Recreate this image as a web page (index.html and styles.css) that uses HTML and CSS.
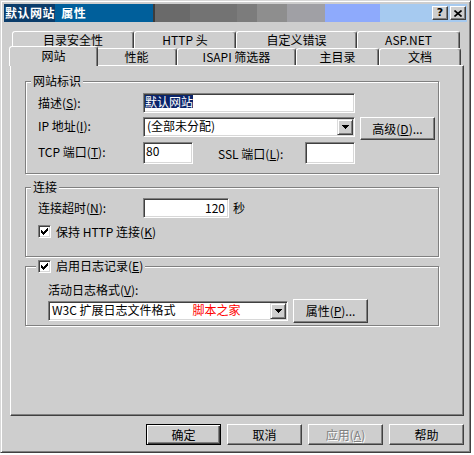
FILE: index.html
```html
<!DOCTYPE html>
<html lang="zh-CN">
<head>
<meta charset="utf-8">
<title>默认网站 属性</title>
<link rel="stylesheet" href="styles.css">
</head>
<body>
<div class="window">
  <div class="titlebar">
    <span class="title">默认网站 属性</span>
    <div class="tb-buttons">
      <span class="tb-btn q">?</span>
      <span class="tb-btn"><svg width="8" height="7" viewBox="0 0 8 7"><path d="M0.5 0.5L7.5 6.5M7.5 0.5L0.5 6.5" stroke="#000" stroke-width="1.6"/></svg></span>
    </div>
  </div>
  <div class="content">
    <div class="tabrow back">
      <div class="tab" style="width:122px">目录安全性</div>
      <div class="tab" style="width:102px">HTTP 头</div>
      <div class="tab" style="width:121px">自定义错误</div>
      <div class="tab" style="width:103px">ASP.NET</div>
    </div>
    <div class="tabrow front">
      <div class="tab sel" style="width:89px">网站</div>
      <div class="tab" style="width:81px">性能</div>
      <div class="tab" style="width:119px">ISAPI 筛选器</div>
      <div class="tab" style="width:83px">主目录</div>
      <div class="tab" style="width:82px">文档</div>
    </div>
    <div class="panel">
      <div class="group g1">
        <div class="gtitle">网站标识</div>
        <div class="row r1">
          <span class="lbl">描述(<u>S</u>):</span>
          <div class="field desc"><span class="hl">默认网站</span></div>
        </div>
        <div class="row r2">
          <span class="lbl lbl-top">IP 地址(<u>I</u>):</span>
          <div class="combo ip"><span class="ctext">(全部未分配)</span><span class="drop"><svg width="7" height="4" viewBox="0 0 7 4" shape-rendering="crispEdges"><path d="M0 0h7v1H0z M1 1h5v1H1z M2 2h3v1H2z M3 3h1v1H3z" fill="#000"/></svg></span></div>
          <button class="btn adv">高级(<u>D</u>)...</button>
        </div>
        <div class="row r3">
          <span class="lbl lbl-top">TCP 端口(<u>T</u>):</span>
          <div class="field port">80</div>
          <span class="ssl-lbl">SSL 端口(<u>L</u>):</span>
          <div class="field port"></div>
        </div>
      </div>

      <div class="group g2">
        <div class="gtitle">连接</div>
        <div class="row c1">
          <span class="lbl">连接超时(<u>N</u>):</span>
          <div class="field timeout">120</div>
          <span class="sec">秒</span>
        </div>
        <div class="row c2">
          <span class="check"><svg width="7" height="7" viewBox="0 0 7 7" shape-rendering="crispEdges"><path d="M6 0h1v1H6z M5 1h2v1H5z M0 2h1v1H0z M4 2h3v1H4z M0 3h2v1H0z M3 3h3v1H3z M0 4h5v1H0z M1 5h3v1H1z M2 6h1v1H2z" fill="#000"/></svg></span>
          <span class="chk-lbl">保持 HTTP 连接(<u>K</u>)</span>
        </div>
      </div>

      <div class="group g3">
        <div class="gtitle chk-title">
          <span class="check"><svg width="7" height="7" viewBox="0 0 7 7" shape-rendering="crispEdges"><path d="M6 0h1v1H6z M5 1h2v1H5z M0 2h1v1H0z M4 2h3v1H4z M0 3h2v1H0z M3 3h3v1H3z M0 4h5v1H0z M1 5h3v1H1z M2 6h1v1H2z" fill="#000"/></svg></span>
          <span class="chk-lbl">启用日志记录(<u>E</u>)</span>
        </div>
        <div class="log-lbl">活动日志格式(<u>V</u>):</div>
        <div class="row l2">
          <div class="combo logfmt"><span class="ctext">W3C 扩展日志文件格式<span class="mark">脚本之家</span></span><span class="drop"><svg width="7" height="4" viewBox="0 0 7 4" shape-rendering="crispEdges"><path d="M0 0h7v1H0z M1 1h5v1H1z M2 2h3v1H2z M3 3h1v1H3z" fill="#000"/></svg></span></div>
          <button class="btn prop">属性(<u>P</u>)...</button>
        </div>
      </div>
    </div>
    <div class="buttons">
      <button class="btn def">确定</button>
      <button class="btn">取消</button>
      <button class="btn dis">应用(<u>A</u>)</button>
      <button class="btn">帮助</button>
    </div>
  </div>
</div>
</body>
</html>
```
FILE: styles.css
```css
* { box-sizing: border-box; }
body {
  margin: 0;
  background: #fff;
  font: 12px/16px "Noto Sans CJK SC", "Liberation Sans", sans-serif;
  color: #000;
}
u { text-decoration: underline; text-underline-offset: 1px; }

.window {
  width: 471px;
  height: 453px;
  background: #cecece;
  border: 1px solid;
  border-color: #d8d8d8 #404040 #404040 #d8d8d8;
  box-shadow: inset 1px 1px #fff, inset -1px -1px #808080;
  padding: 3px;
  display: flex;
  flex-direction: column;
}

.titlebar {
  height: 18px;
  flex: none;
  display: flex;
  align-items: center;
  justify-content: space-between;
  padding: 0 1px 0 1px;
  background: linear-gradient(to right,
    #0b3c6a 0 51px,
    #005f9b 51px 149px,
    #3c3c3c 149px 151px,
    #6a6a6a 151px 186px,
    #737373 186px 233px,
    #7c7c7c 233px 253px,
    #8e8e8e 253px 283px,
    #a0a0a5 283px 321px,
    #8eaafc 321px 376px,
    #a6caf0 376px);
}
.title {
  color: #fff;
  font-weight: bold;
  font-size: 12px;
  letter-spacing: 0.5px;
  word-spacing: 3px;
  line-height: 18px;
}
.tb-buttons { display: flex; gap: 2px; }
.tb-btn {
  width: 16px;
  height: 14px;
  background: #cecece;
  border: 1px solid;
  border-color: #fff #404040 #404040 #fff;
  box-shadow: inset -1px -1px #808080;
  display: flex;
  align-items: center;
  justify-content: center;
}
.tb-btn.q {
  font: bold 11px/12px "DejaVu Sans", sans-serif;
}

.content {
  flex: 1;
  display: flex;
  flex-direction: column;
  padding: 9px 3px 0 6px;
}

.tabrow { display: flex; height: 17px; flex: none; }
.tabrow.back { margin-left: 2px; }
.tabrow.front { margin-left: 1px; align-items: flex-end; }
.tab {
  height: 17px;
  flex: none;
  border: 1px solid;
  border-bottom: none;
  border-color: #fff #404040 transparent #fff;
  box-shadow: inset -1px 0 #808080;
  border-radius: 3px 3px 0 0;
  text-align: center;
  line-height: 16px;
  background: #cecece;
}
.tab.sel {
  height: 20px;
  margin: 0 -2px -1px -2px;
  position: relative;
  z-index: 1;
  line-height: 17px;
}

.panel {
  height: 351px;
  flex: none;
  border: 1px solid;
  border-color: #fff #404040 #404040 #fff;
  box-shadow: inset -1px -1px #808080;
  padding: 15px 0 0 14px;
}

.group {
  width: 414px;
  border: 1px solid #808080;
  box-shadow: inset 1px 1px #fff, 1px 1px #fff;
  padding: 0 0 0 12px;
}
.g1 { height: 93px; }
.g2 { height: 70px; margin-top: 13px; }
.g3 { height: 60px; margin-top: 9px; }

.gtitle {
  margin: -9px 0 0 -7px;
  padding: 0 2px;
  background: #cecece;
  width: fit-content;
  height: 16px;
  line-height: 16px;
}
.gtitle.chk-title {
  margin-left: -2px;
  display: flex;
  align-items: center;
  gap: 5px;
}

.row { display: flex; align-items: center; }
.lbl { width: 105px; flex: none; }
.lbl-top { align-self: flex-start; padding-top: 1px; }

.r1 { margin-top: 4px; height: 20px; }
.r2 { margin-top: 4px; height: 23px; align-items: flex-start; }
.r3 { margin-top: 2px; height: 22px; align-items: flex-start; }

.field {
  height: 20px;
  background: #fff;
  border: 1px solid;
  border-color: #808080 #fff #fff #808080;
  box-shadow: inset 1px 1px #404040, inset -1px -1px #d8d8d8;
  padding: 1px 2px 0 2px;
  line-height: 14px;
  display: flex;
  align-items: flex-start;
}
.field.desc { width: 212px; padding-left: 1px; }
.hl { background: #0a246a; color: #fff; height: 13px; line-height: 14px; }
.field.port { width: 50px; height: 22px; padding-left: 2px; }
.ssl-lbl { width: 87px; margin-left: 25px; padding-top: 4px; }
.r3 .lbl-top { padding-top: 2px; }

.combo {
  height: 20px;
  background: #fff;
  border: 1px solid;
  border-color: #808080 #fff #fff #808080;
  box-shadow: inset 1px 1px #404040, inset -1px -1px #d8d8d8;
  padding: 1px 1px 1px 3px;
  display: flex;
  align-items: flex-start;
  line-height: 14px;
}
.combo .ctext { flex: 1; white-space: nowrap; }
.combo.ip { width: 212px; }
.drop {
  width: 16px;
  height: 16px;
  flex: none;
  background: #cecece;
  border: 1px solid;
  border-color: #dcdcdc #404040 #404040 #dcdcdc;
  box-shadow: inset 1px 1px #fff, inset -1px -1px #808080;
  display: flex;
  align-items: center;
  justify-content: center;
}

.btn {
  width: 75px;
  height: 23px;
  padding: 0;
  font: inherit;
  color: #000;
  background: #cecece;
  border: 1px solid;
  border-color: #fff #404040 #404040 #fff;
  box-shadow: inset -1px -1px #808080;
  display: flex;
  align-items: center;
  justify-content: center;
}
.btn.adv { margin-left: 5px; }

.c1 { margin-top: 3px; height: 20px; }
.field.timeout { width: 86px; justify-content: flex-end; padding-right: 3px; padding-top: 2px; }
.sec { margin-left: 4px; }
.c2 { margin-top: 5px; height: 17px; gap: 5px; }

.check {
  width: 13px;
  height: 13px;
  flex: none;
  background: #fff;
  border: 1px solid;
  border-color: #808080 #fff #fff #808080;
  box-shadow: inset 1px 1px #404040, inset -1px -1px #d8d8d8;
  display: flex;
  align-items: center;
  justify-content: center;
}

.log-lbl { margin: 8px 0 0 10px; height: 16px; line-height: 16px; }
.l2 { margin: 1px 0 0 10px; height: 24px; }
.combo.logfmt { width: 240px; }
.mark { color: #ff0000; margin-left: 17px; }
.btn.prop { margin-left: 5px; height: 24px; }

.buttons {
  display: flex;
  justify-content: flex-end;
  gap: 6px;
  margin-top: 8px;
}
.buttons .btn { height: 21px; }
.btn.def {
  border: 1px solid #000;
  box-shadow: inset 1px 1px #fff, inset -1px -1px #404040, inset -2px -2px #808080;
}
.btn.dis { color: #808080; text-shadow: 1px 1px #fff; }
```
